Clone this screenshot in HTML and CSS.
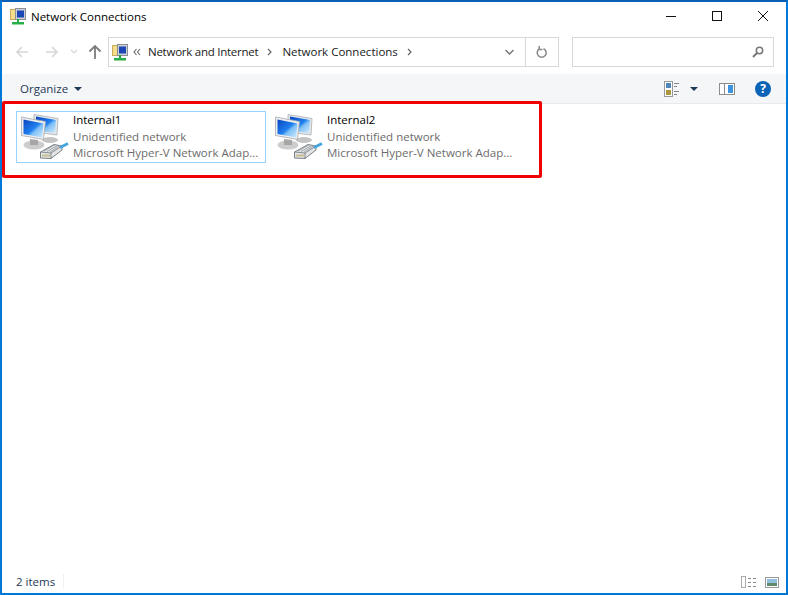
FILE: index.html
```html
<!DOCTYPE html>
<html lang="en">
<head>
    <meta charset="UTF-8">
    <title>Network Connections</title>
    <link rel="stylesheet" href="styles.css">
</head>
<body>
    <svg class="defs" width="0" height="0">
        <defs>
            <linearGradient id="screen" x1="0" y1="0" x2="1" y2="1">
                <stop offset="0" stop-color="#0a45c0"/>
                <stop offset="0.5" stop-color="#1f7fee"/>
                <stop offset="0.62" stop-color="#7fc0f7"/>
                <stop offset="1" stop-color="#d3ecfc"/>
            </linearGradient>
            <symbol id="netIcon" viewBox="0 0 50 46">
                <ellipse cx="30" cy="26" rx="8" ry="3" fill="#c4c4c4"/>
                <polygon points="14,0.500 38,4.500 37,21 14,18" fill="#e4e7ea" stroke="#a9aeb4" stroke-width="0.800"/>
                <polygon points="16,2.500 36,6 35,19 16,16.500" fill="url(#screen)"/>
                <ellipse cx="14" cy="31" rx="10.500" ry="4.500" fill="#cdcdcd"/>
                <polygon points="10,25 18,26 18,31 10,31" fill="#a6a6a6"/>
                <polygon points="1.500,3 25.500,7.500 23.500,25.500 1.500,21.500" fill="#eceef0" stroke="#a4a9af" stroke-width="0.800"/>
                <polygon points="3.500,5.500 23.500,9.500 22,23.500 3.500,20" fill="url(#screen)"/>
                <polygon points="20.500,38 34,30.500 42,32 42,36 31,44.500 20.500,44" fill="#e3e5e7" stroke="#6d7378" stroke-width="0.900"/>
                <path d="M20.500 38l10.500 1 11-7M31 39v5.500" stroke="#6d7378" stroke-width="0.800" fill="none"/>
                <path d="M24 37l10.500-6M27 37.500l10.500-6M30 38l10-6.500" stroke="#9a9fa3" stroke-width="0.900" fill="none"/>
                <path d="M22.500 41.500h7" stroke="#a89a3a" stroke-width="2" stroke-dasharray="1 1"/>
                <path d="M40 33.500l8-4" stroke="#46a5dc" stroke-width="3"/>
            </symbol>
            <symbol id="smallNet" viewBox="0 0 16 17">
                <rect x="0.500" y="1.500" width="9" height="10" fill="#f5dd8c" stroke="#c9ad5c"/>
                <rect x="5.500" y="0.500" width="10" height="11" fill="#ccd0d6" stroke="#8a8f96"/>
                <rect x="7" y="2.500" width="7" height="7" fill="#1c46b4"/>
                <rect x="7" y="11" width="2" height="3" fill="#27a844"/>
                <rect x="2" y="14" width="12" height="2.500" fill="#27b04a"/>
            </symbol>
        </defs>
    </svg>

    <div class="window">
        <div class="titlebar">
            <svg class="title-icon"><use href="#smallNet"/></svg>
            <span class="title">Network Connections</span>
            <div class="caption-buttons">
                <svg width="12" height="12"><path d="M1 6.500h10" stroke="#111" fill="none"/></svg>
                <svg width="12" height="12"><rect x="1.500" y="1.500" width="9" height="9" stroke="#111" fill="none"/></svg>
                <svg width="12" height="12"><path d="M1 1l10 10M11 1L1 11" stroke="#111" fill="none"/></svg>
            </div>
        </div>

        <div class="navbar">
            <div class="nav-buttons">
                <svg width="14" height="14"><path d="M13 7H2M7 2L2 7l5 5" stroke="#d6d6d6" stroke-width="1.600" fill="none"/></svg>
                <svg width="14" height="14"><path d="M1 7h11M7 2l5 5-5 5" stroke="#d6d6d6" stroke-width="1.600" fill="none"/></svg>
                <svg width="8" height="6"><path d="M1 1l3 3 3-3" stroke="#d6d6d6" stroke-width="1.200" fill="none"/></svg>
                <svg width="14" height="16"><path d="M7 15V2M1.500 7.500L7 2l5.500 5.500" stroke="#7c7c7c" stroke-width="1.800" fill="none"/></svg>
            </div>
            <div class="address">
                <svg class="address-icon"><use href="#smallNet"/></svg>
                <svg class="crumb-back" width="8" height="8"><path d="M3.500 1L1 4l2.500 3M7 1L4.500 4 7 7" stroke="#666" stroke-width="1.100" fill="none"/></svg>
                <span class="crumb crumb-tight">Network and Internet</span>
                <svg class="crumb-sep" width="5" height="8"><path d="M1 1l3 3-3 3" stroke="#666" stroke-width="1.200" fill="none"/></svg>
                <span class="crumb">Network Connections</span>
                <svg class="crumb-sep" width="5" height="8"><path d="M1 1l3 3-3 3" stroke="#666" stroke-width="1.200" fill="none"/></svg>
                <div class="address-end">
                    <div class="address-drop">
                        <svg width="9" height="6"><path d="M0.500 1l4 4 4-4" stroke="#777" stroke-width="1.500" fill="none"/></svg>
                    </div>
                    <div class="address-refresh">
                        <svg width="12" height="13" viewBox="0 0 12 13"><path d="M7.500 2.600a4.500 4.500 0 1 1-4.200 0.300M3.200 0v3.500h3.300" stroke="#888" stroke-width="1.500" fill="none"/></svg>
                    </div>
                </div>
            </div>
            <div class="search">
                <svg width="12" height="12"><circle cx="7.500" cy="4.500" r="3.200" stroke="#777" stroke-width="1.500" fill="none"/><path d="M5 7l-4 4" stroke="#777" stroke-width="2"/></svg>
            </div>
        </div>

        <div class="toolbar">
            <span class="organize">Organize</span>
            <span class="caret"></span>
            <div class="toolbar-right">
                <svg class="views-icon" width="16" height="16">
                    <rect x="0.500" y="0.500" width="8" height="15" fill="#fff" stroke="#999"/>
                    <rect x="2" y="2" width="5" height="5" fill="#4f86b8"/>
                    <rect x="2" y="9" width="5" height="5" fill="#a8973e"/>
                    <path d="M10 2.500h5M10 5.500h3M10 10.500h5M10 13.500h3" stroke="#888"/>
                </svg>
                <span class="caret views-caret"></span>
                <svg class="pane-icon" width="16" height="12">
                    <rect x="0.500" y="0.500" width="15" height="11" fill="#fff" stroke="#8c8c8c"/>
                    <rect x="9" y="2" width="5" height="8" fill="#3d95e0"/>
                    <path d="M5.500 1v10" stroke="#8c8c8c"/>
                </svg>
                <span class="help">?</span>
            </div>
        </div>

        <div class="content">
            <div class="item selected">
                <svg class="item-icon"><use href="#netIcon"/></svg>
                <div class="item-text">
                    <div class="item-name">Internal1</div>
                    <div class="item-sub">Unidentified network</div>
                    <div class="item-sub">Microsoft Hyper-V Network Adap...</div>
                </div>
            </div>
            <div class="item">
                <svg class="item-icon"><use href="#netIcon"/></svg>
                <div class="item-text">
                    <div class="item-name">Internal2</div>
                    <div class="item-sub">Unidentified network</div>
                    <div class="item-sub">Microsoft Hyper-V Network Adap...</div>
                </div>
            </div>
        </div>

        <div class="statusbar">
            <span class="count">2 items</span>
            <div class="status-right">
                <svg width="16" height="12">
                    <rect x="0.500" y="0.500" width="4" height="11" fill="#fff" stroke="#aaa"/>
                    <path d="M7 2.500h3M12 2.500h3M7 6.500h3M12 6.500h3M7 10.500h3M12 10.500h3" stroke="#888"/>
                </svg>
                <svg width="14" height="12">
                    <rect x="0.500" y="1.500" width="13" height="10" fill="#fff" stroke="#999"/>
                    <rect x="2" y="3" width="10" height="4" fill="#8fc0de"/>
                    <rect x="2" y="7" width="10" height="3" fill="#5f8a6a"/>
                </svg>
            </div>
        </div>

        <div class="highlight"></div>
    </div>
</body>
</html>
```

FILE: styles.css
```css
body {
    margin: 0;
    font-family: "Open Sans", "Noto Sans", sans-serif;
    font-size: 11.5px;
    background: white;
}
.defs {
    position: absolute;
}
.window {
    position: relative;
    box-sizing: border-box;
    width: 788px;
    height: 595px;
    border: 2px solid #0078d7;
    border-top-color: #0a5fb4;
    display: flex;
    flex-direction: column;
    background: white;
}
.titlebar {
    height: 28px;
    display: flex;
    align-items: center;
    padding-left: 8px;
    color: #000;
}
.title-icon {
    width: 16px;
    height: 17px;
    margin-right: 5px;
}
.caption-buttons {
    margin-left: auto;
    display: flex;
    gap: 34px;
    padding-right: 17px;
}
.navbar {
    height: 44px;
    display: flex;
    align-items: center;
}
.nav-buttons {
    width: 106px;
    display: flex;
    align-items: center;
    padding-left: 13px;
    box-sizing: border-box;
}
.nav-buttons svg:nth-child(1) {
    margin-right: 16px;
}
.nav-buttons svg:nth-child(2) {
    margin-right: 11px;
}
.nav-buttons svg:nth-child(3) {
    margin-right: 10px;
}
.address {
    box-sizing: border-box;
    width: 451px;
    height: 30px;
    border: 1px solid #d9d9d9;
    display: flex;
    align-items: center;
    padding-left: 3px;
}
.address-icon {
    width: 16px;
    height: 17px;
    margin-right: 5px;
}
.crumb-back {
    margin-right: 7px;
}
.crumb {
    color: #1a1a1a;
    padding-bottom: 2px;
}
.crumb-tight {
    letter-spacing: -0.25px;
}
.crumb-sep {
    margin: 0 10px 0 9px;
}
.address-end {
    margin-left: auto;
    display: flex;
    height: 100%;
}
.address-drop,
.address-refresh {
    display: flex;
    align-items: center;
    justify-content: center;
}
.address-drop {
    width: 32px;
}
.address-refresh {
    width: 32px;
    border-left: 1px solid #d9d9d9;
}
.search {
    box-sizing: border-box;
    width: 202px;
    height: 30px;
    margin-left: 13px;
    border: 1px solid #d9d9d9;
    display: flex;
    align-items: center;
    justify-content: flex-end;
    padding-right: 9px;
}
.toolbar {
    height: 30px;
    background: #f5f6f7;
    border-bottom: 1px solid #e8e9ea;
    display: flex;
    align-items: center;
    padding-left: 18px;
    box-sizing: border-box;
}
.organize {
    color: #1e3957;
}
.caret {
    width: 0;
    height: 0;
    margin-left: 6px;
    margin-top: 1px;
    border-left: 4px solid transparent;
    border-right: 4px solid transparent;
    border-top: 4px solid #1e3957;
}
.toolbar-right {
    margin-left: auto;
    display: flex;
    align-items: center;
    padding-right: 15px;
}
.views-caret {
    margin-left: 10px;
}
.pane-icon {
    margin-left: 21px;
}
.help {
    width: 16px;
    height: 16px;
    margin-left: 20px;
    border-radius: 50%;
    background: #0b64b8;
    color: white;
    font-weight: bold;
    font-size: 12px;
    line-height: 16px;
    text-align: center;
}
.content {
    flex: 1;
    display: flex;
    align-items: flex-start;
    gap: 4px;
    padding: 7px 0 0 14px;
}
.item {
    box-sizing: border-box;
    width: 250px;
    height: 52px;
    border: 1px solid transparent;
    display: flex;
    align-items: center;
}
.item.selected {
    border-color: #99d1ff;
}
.item-icon {
    width: 50px;
    height: 46px;
    flex-shrink: 0;
    margin: 0 3px;
}
.item-text {
    line-height: 16.5px;
    white-space: nowrap;
}
.item-name {
    color: #000;
}
.item-sub {
    color: #6d6d6d;
}
.statusbar {
    height: 23px;
    display: flex;
    align-items: center;
    padding: 0 7px 0 14px;
}
.count {
    color: #1e3957;
    padding-right: 8px;
    border-right: 1px solid #f0f0f0;
}
.status-right {
    margin-left: auto;
    display: flex;
    align-items: center;
    gap: 8px;
}
.highlight {
    position: absolute;
    left: 0;
    top: 99px;
    width: 534px;
    height: 71px;
    border: 3px solid #f00000;
    border-radius: 2px;
}
```
